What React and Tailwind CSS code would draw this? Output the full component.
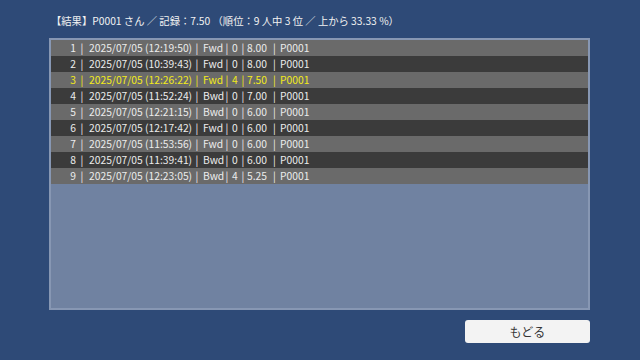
import React from 'react';

const rows = [
  { n: 1, date: '2025/07/05 (12:19:50)', dir: 'Fwd', miss: 0, score: '8.00', id: 'P0001' },
  { n: 2, date: '2025/07/05 (10:39:43)', dir: 'Fwd', miss: 0, score: '8.00', id: 'P0001' },
  { n: 3, date: '2025/07/05 (12:26:22)', dir: 'Fwd', miss: 4, score: '7.50', id: 'P0001', me: true },
  { n: 4, date: '2025/07/05 (11:52:24)', dir: 'Bwd', miss: 0, score: '7.00', id: 'P0001' },
  { n: 5, date: '2025/07/05 (12:21:15)', dir: 'Bwd', miss: 0, score: '6.00', id: 'P0001' },
  { n: 6, date: '2025/07/05 (12:17:42)', dir: 'Fwd', miss: 0, score: '6.00', id: 'P0001' },
  { n: 7, date: '2025/07/05 (11:53:56)', dir: 'Fwd', miss: 0, score: '6.00', id: 'P0001' },
  { n: 8, date: '2025/07/05 (11:39:41)', dir: 'Bwd', miss: 0, score: '6.00', id: 'P0001' },
  { n: 9, date: '2025/07/05 (12:23:05)', dir: 'Bwd', miss: 4, score: '5.25', id: 'P0001' },
];

const font = { fontFamily: '"Noto Sans CJK JP", "Noto Sans", sans-serif' };

const App = () => {
  return (
    <div
      className="w-[640px] h-[360px] bg-[#2e4a77] flex flex-col text-[10.3px] overflow-hidden"
      style={font}
    >
      {/* 結果ヘッダー */}
      <div className="h-[38px] pl-[51px] pt-[13px] text-[#f2f2f2] leading-[16px] whitespace-pre">
        【結果】P0001 さん ／ 記録：7.50 （順位：9 人中 3 位 ／ 上から 33.33 %）
      </div>

      {/* ランキング一覧 */}
      <div className="ml-[49px] w-[541px] h-[272px] border-[2px] border-[#8797b3] bg-[#7082a1] flex flex-col">
        {rows.map((r, i) => (
          <div
            key={r.n}
            className={`h-[16px] shrink-0 flex items-center leading-[16px] whitespace-nowrap ${
              i % 2 === 0 ? 'bg-[#6a6a6a]' : 'bg-[#3b3b3b]'
            } ${r.me ? 'text-[#f3ea1a]' : 'text-[#ececec]'}`}
          >
            <span className="w-[25px] shrink-0 text-right">{r.n}</span>
            <span className="w-[12px] shrink-0 text-center">|</span>
            <span className="w-[104px] shrink-0 pl-[1px]">{r.date}</span>
            <span className="w-[10px] shrink-0 text-center">|</span>
            <span className="w-[20px] shrink-0 pl-[1px]">{r.dir}</span>
            <span className="w-[10px] shrink-0 text-center">|</span>
            <span className="w-[7px] shrink-0">{r.miss}</span>
            <span className="w-[8px] shrink-0 text-center">|</span>
            <span className="w-[22px] shrink-0">{r.score}</span>
            <span className="w-[11px] shrink-0 text-center">|</span>
            <span className="shrink-0">{r.id}</span>
          </div>
        ))}
      </div>

      {/* もどるボタン */}
      <div className="flex justify-end pr-[50px] pt-[10px]">
        <button className="w-[125px] h-[23px] bg-[#f3f3f3] rounded-[3px] text-[#333333] text-[12px] leading-[23px]">
          もどる
        </button>
      </div>
    </div>
  );
};

export default App;
